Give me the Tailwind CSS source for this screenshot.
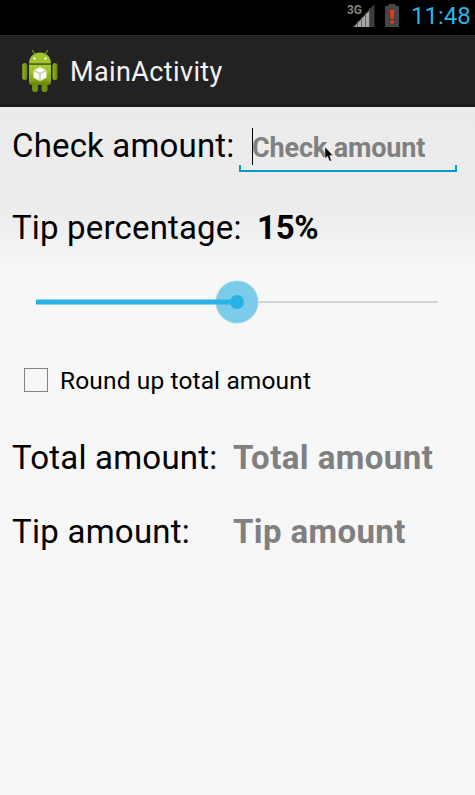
<!DOCTYPE html>
<html lang="en">
<head>
<meta charset="utf-8">
<title>MainActivity</title>
<script src="https://cdn.jsdelivr.net/npm/@tailwindcss/browser@4"></script>
</head>
<body class="w-[475px] h-[795px] overflow-hidden bg-[#f7f7f7] font-[Roboto,sans-serif] text-black">
<div class="flex flex-col w-[475px] h-[795px]">
  <!-- Status bar -->
  <div class="h-[35px] shrink-0 bg-black flex items-start justify-end pr-[6px]">
    <svg class="w-[56px] h-[35px] mr-[4px] shrink-0" viewBox="346 0 56 35">
      <text x="347" y="14" font-size="13.5" font-weight="bold" fill="#828282" textLength="15" lengthAdjust="spacingAndGlyphs">3G</text>
      <path d="M353 27L374.500 4V27Z" fill="#3d3d3d"/>
      <path d="M354 27L369 11V27Z" fill="#a6a6a6"/>
      <path d="M357.500 21V27M361.500 17V27M365.500 13V27M369.500 8V27" stroke="#555" stroke-width=".8"/>
      <path d="M385 6H388.500V4H395.500V6H399V27H385Z" fill="#464646"/>
      <path d="M390 10H394.200L393.300 19H390.900Z" fill="#ff3300"/>
      <rect x="390.200" y="20.500" width="3.600" height="3" rx="1" fill="#ff3300"/>
    </svg>
    <span class="block text-[24px] leading-[33px] text-[#2eb1e4] whitespace-nowrap w-[58px] ml-[5px]">11:48</span>
  </div>
  <!-- Action bar -->
  <div class="h-[72px] shrink-0 bg-[#222222] border-t border-[#2d2d2d] border-b-[3px] border-b-[#1c1a1a] flex items-center pl-[20px]">
    <svg class="w-[40px] h-[46px] mt-[2px] shrink-0" viewBox="20 48 40 46">
      <defs>
        <linearGradient id="g" x1="0" y1="0" x2="0" y2="1"><stop offset="0" stop-color="#abce29"/><stop offset=".7" stop-color="#88ac18"/><stop offset="1" stop-color="#65850d"/></linearGradient>
        <linearGradient id="h" x1="0" y1="0" x2="1" y2="0"><stop offset="0" stop-color="#91b51c"/><stop offset="1" stop-color="#638010"/></linearGradient>
      </defs>
      <path d="M32.500 50.500L35 54.500M47.500 50.500L45 54.500" stroke="#759719" stroke-width="1.300" stroke-linecap="round"/>
      <rect x="22.300" y="63" width="5" height="17" rx="2.500" fill="url(#h)"/>
      <rect x="52.500" y="63" width="5" height="17" rx="2.500" fill="url(#h)"/>
      <rect x="32" y="82" width="6" height="10" rx="2.800" fill="#6d8f10"/>
      <rect x="41.500" y="82" width="6" height="10" rx="2.800" fill="#6d8f10"/>
      <path d="M29 63.500C29 48.700 51 48.700 51 63.500Z" fill="#9fc32d"/>
      <circle cx="34.500" cy="58.500" r="1.200" fill="#fff"/><circle cx="45.500" cy="58.500" r="1.200" fill="#fff"/>
      <path d="M29 64.800H51V82Q51 85 48 85H32Q29 85 29 82Z" fill="url(#g)"/>
      <path d="M29 64.300H51" stroke="#5e7918" stroke-width=".8"/>
      <path d="M40 67L46.500 70.200V77.500L40 81.200L33.500 77.500V70.200Z" fill="#fafaf5"/>
      <path d="M33.500 70.500L40 73.500L46.500 70.500M40 73.500V81" stroke="#a4ab91" stroke-width=".9" fill="none"/>
    </svg>
    <span class="ml-[10px] mt-[4px] text-[27px] leading-[36px] tracking-[0.38px] text-[#f3f3f3] whitespace-nowrap">MainActivity</span>
  </div>
  <!-- Form -->
  <div class="flex-1 flex flex-col bg-[linear-gradient(to_bottom,#ebebeb_0px,#ededed_110px,#f7f7f7_162px,#f7f7f7_100%)]">
    <div class="h-[78px] flex items-center pl-[12px]">
      <span class="w-[227px] shrink-0 text-[33px] leading-[40px] tracking-[0.17px] whitespace-nowrap">Check amount:</span>
      <div class="relative w-[218px] h-[51px] pl-[12px]">
        <div class="absolute left-0 bottom-0 w-full h-[7px] border-x-2 border-b-2 border-[#0099cc]"></div>
        <div class="absolute left-[13px] top-[7px] w-px h-[37px] bg-black"></div>
        <span class="block pl-px text-[27px] leading-[55px] tracking-[-0.15px] font-bold text-[#808080] whitespace-nowrap">Check amount</span>
        <svg class="absolute left-[85px] top-[25px] w-[11px] h-[17px]" viewBox="0 0 11 17"><path d="M1 1V12.500L3.500 10.200L5.500 15H7.500L5.700 9.500H9Z" fill="#000" stroke="#eee" stroke-width=".5"/></svg>
      </div>
    </div>
    <div class="h-[86px] flex items-center pl-[12px]">
      <span class="w-[245px] shrink-0 text-[33px] leading-[40px] tracking-[0.17px] whitespace-nowrap">Tip percentage:</span>
      <span class="text-[33px] leading-[40px] tracking-[-0.3px] font-bold whitespace-nowrap">15%</span>
    </div>
    <div class="h-[62px] px-[36px]">
      <svg class="w-[403px] h-[62px]" viewBox="36 271 403 62">
        <rect x="237" y="301" width="201" height="2" fill="#d2d2d2"/>
        <circle cx="237" cy="302" r="22" fill="#dce9ef"/>
        <circle cx="237" cy="302" r="21" fill="#7bcbea"/>
        <rect x="36" y="299.500" width="201" height="5" fill="#29b3e6"/>
        <circle cx="237" cy="302" r="7" fill="#27b1e5"/>
      </svg>
    </div>
    <div class="h-[94px] flex items-center pl-[24px]">
      <span class="w-[24px] h-[24px] border border-[#858585] shrink-0"></span>
      <span class="ml-[12px] mt-[2px] text-[24.500px] leading-[32px] tracking-[0.13px] whitespace-nowrap">Round up total amount</span>
    </div>
    <div class="h-[62px] flex items-center pl-[12px]">
      <span class="w-[221px] shrink-0 text-[33px] leading-[40px] tracking-[0.2px] whitespace-nowrap">Total amount:</span>
      <span class="text-[33px] leading-[40px] tracking-[0.43px] font-bold text-[#808080] whitespace-nowrap">Total amount</span>
    </div>
    <div class="h-[86px] flex items-center pl-[12px]">
      <span class="w-[221px] shrink-0 text-[33px] leading-[40px] tracking-[0.25px] whitespace-nowrap">Tip amount:</span>
      <span class="text-[33px] leading-[40px] tracking-[0.38px] font-bold text-[#808080] whitespace-nowrap">Tip amount</span>
    </div>
  </div>
</div>
</body>
</html>
